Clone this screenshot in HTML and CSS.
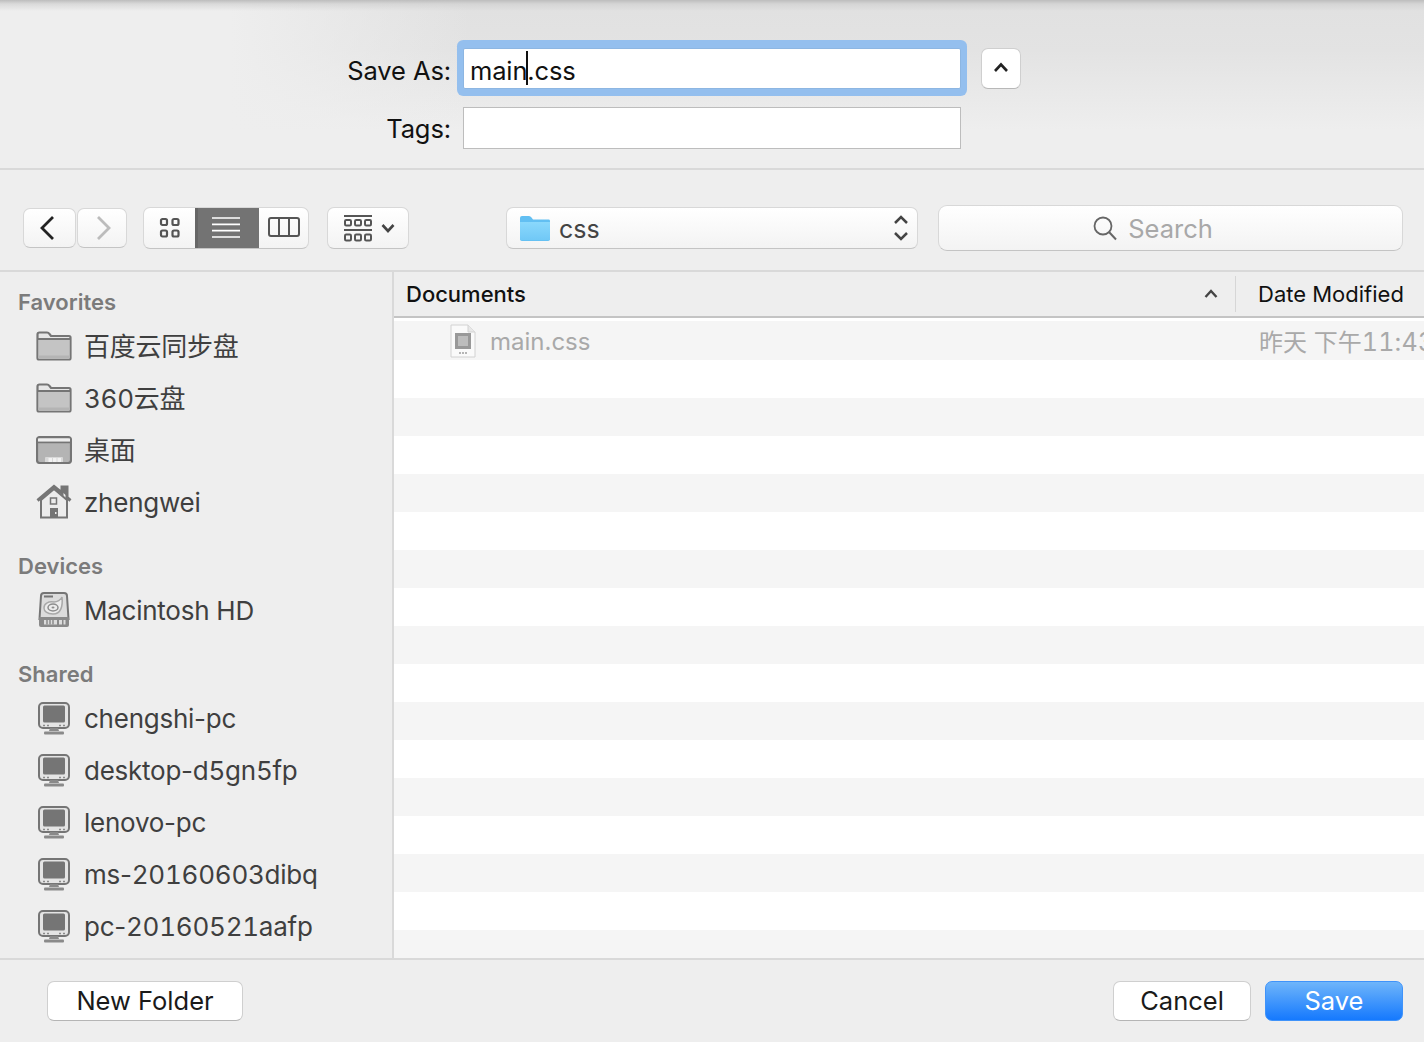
FILE: index.html
```html
<!DOCTYPE html>
<html lang="en">
<head>
<meta charset="utf-8">
<title>Save</title>
<link rel="stylesheet" href="styles.css">
</head>
<body>
<svg class="defs" width="0" height="0" aria-hidden="true">
  <defs>
    <linearGradient id="blue" x1="0" y1="0" x2="0" y2="1"><stop offset="0" stop-color="#8ad8fc"/><stop offset="1" stop-color="#70c8f6"/></linearGradient>
  </defs>
  <symbol id="folder" viewBox="0 0 36 30">
    <path d="M1.500 27V3.500Q1.500 1.500 3.500 1.500H11Q12.500 1.500 13.500 3L15 5H33Q34.500 5 34.500 6.500V27Q34.500 28.500 33 28.500H3Q1.500 28.500 1.500 27Z" fill="#e6e6e6" stroke="#757575" stroke-width="2.200"/>
    <path d="M2.500 9H33.500V27.500H2.500Z" fill="#c4c4c4"/>
    <path d="M2.500 24.500H33.500V27.500H2.500Z" fill="#b4b4b4"/>
    <path d="M2 8H34" stroke="#757575" stroke-width="2"/>
  </symbol>
  <symbol id="desktop" viewBox="0 0 36 28">
    <rect x="1" y="1" width="34" height="26" rx="3" fill="#b4b4b4" stroke="#757575" stroke-width="2.200"/>
    <path d="M2 2.500H34V5.500H2Z" fill="#eee"/>
    <path d="M2 6.500H34" stroke="#757575" stroke-width="1.500"/>
    <path d="M9 26V22Q9 21 10 21H26Q27 21 27 22V26Z" fill="#d8d8d8"/>
    <path d="M12.500 22H16V26H12.500ZM17 22H20.500V26H17ZM21.500 22H25V26H21.500Z" fill="#f2f2f2"/>
  </symbol>
  <symbol id="home" viewBox="0 0 36 36">
    <path d="M5 33.500V16L18 5 31 16V33.500Z" fill="#ececec" stroke="#757575" stroke-width="2"/>
    <path d="M1.500 16.500 18 2.500 26 9V3H31V13.500L34.500 16.500" fill="#757575" fill-opacity="0" stroke="#757575" stroke-width="3"/>
    <path d="M26 3H31V12L26 8Z" fill="#757575"/>
    <rect x="14.500" y="14" width="6" height="6" fill="none" stroke="#757575" stroke-width="1.500"/>
    <rect x="14" y="24" width="8" height="10" fill="#757575"/>
    <rect x="19" y="28" width="1.500" height="2" fill="#eee"/>
  </symbol>
  <symbol id="disk" viewBox="0 0 32 36">
    <path d="M1.500 27 3 4Q3 1 6 1H26Q29 1 29 4L30.500 27Z" fill="#dcdcdc" stroke="#757575" stroke-width="2"/>
    <path d="M6 4.500H15" stroke="#757575" stroke-width="2"/>
    <path d="M24 5C25 14 23 22 15 22 9 22 6 19 6 16 6 12 10 9 16 10 19 10 23 8 24 5Z" fill="#ececec" stroke="#a8a8a8" stroke-width="1.500"/>
    <ellipse cx="15" cy="15.500" rx="5" ry="3.500" fill="none" stroke="#8c8c8c" stroke-width="1.500"/>
    <ellipse cx="15" cy="15.500" rx="1.500" ry="1" fill="#8c8c8c"/>
    <path d="M1 26Q1 25 2 25H30Q31 25 31 26V33Q31 35 29 35H3Q1 35 1 33Z" fill="#8a8a8a"/>
    <path d="M6 28H19V32.500H6Z" fill="#dcdcdc"/>
    <path d="M9 28V32.500M12 28V32.500M15 28V32.500" stroke="#8a8a8a" stroke-width="1.500" fill="none"/>
    <path d="M21 28H24V32.500H21ZM25.500 28H27.500V32.500H25.500Z" fill="#dcdcdc"/>
  </symbol>
  <symbol id="computer" viewBox="0 0 32 33">
    <rect x="1" y="1" width="30" height="25" rx="4" fill="#e4e4e4" stroke="#757575" stroke-width="2"/>
    <rect x="5" y="3.500" width="22" height="17" rx="1.500" fill="#757575"/>
    <path d="M5 23.500H7M9 23.500H11M21 23.500H23M25 23.500H27" stroke="#8a8a8a" stroke-width="1.500"/>
    <path d="M12 26H20L21 29H11Z" fill="#8a8a8a"/>
    <rect x="6" y="29.500" width="20" height="3" rx="1" fill="#8a8a8a"/>
  </symbol>
</svg>

<main class="dialog">
  <section class="name-panel">
    <div class="name-grid">
      <label class="field-label">Save As:</label>
      <div class="field field-focus"><span class="typed">main<span class="caret"></span>.css</span></div>
      <button class="disclosure" type="button" aria-label="Collapse">
        <svg width="16" height="12" viewBox="0 0 16 12"><path d="M2 10 8 3.500 14 10" fill="none" stroke="#222" stroke-width="2.600"/></svg>
      </button>
      <label class="field-label">Tags:</label>
      <div class="field"></div>
    </div>
  </section>

  <section class="toolbar">
    <div class="segments nav">
      <button class="tool back" type="button" aria-label="Back">
        <svg width="16" height="26" viewBox="0 0 16 26"><path d="M14 2 3 13 14 24" fill="none" stroke="#222" stroke-width="2.800"/></svg>
      </button>
      <button class="tool forward" type="button" aria-label="Forward">
        <svg width="16" height="26" viewBox="0 0 16 26"><path d="M2 2 13 13 2 24" fill="none" stroke="#bcbcbc" stroke-width="2.800"/></svg>
      </button>
    </div>
    <div class="view-group">
      <button class="view view-icons" type="button" aria-label="Icons">
        <svg width="22" height="22" viewBox="0 0 22 22"><g fill="none" stroke="#555" stroke-width="2.200"><rect x="2" y="2" width="6" height="6" rx="1.500"/><rect x="13.500" y="2" width="6" height="6" rx="1.500"/><rect x="2" y="13.500" width="6" height="6" rx="1.500"/><rect x="13.500" y="13.500" width="6" height="6" rx="1.500"/></g></svg>
      </button>
      <button class="view view-list" type="button" aria-label="List">
        <svg width="30" height="22" viewBox="0 0 30 22"><path d="M1 2H29M1 8.300H29M1 14.600H29M1 21H29" stroke="#fff" stroke-width="1.700"/></svg>
      </button>
      <button class="view view-columns" type="button" aria-label="Columns">
        <svg width="32" height="20" viewBox="0 0 32 20"><path d="M1 3Q1 1 3 1H29Q31 1 31 3V17Q31 19 29 19H3Q1 19 1 17ZM11 1V19M21 1V19" fill="none" stroke="#555" stroke-width="2"/></svg>
      </button>
    </div>
    <button class="arrange" type="button" aria-label="Arrange">
      <svg width="30" height="27" viewBox="0 0 30 27"><path d="M1 1H29M1 15H29" stroke="#555" stroke-width="2"/><g fill="none" stroke="#555" stroke-width="2"><rect x="2" y="5" width="6" height="5.500" rx="1.200"/><rect x="12" y="5" width="6" height="5.500" rx="1.200"/><rect x="22" y="5" width="6" height="5.500" rx="1.200"/><rect x="2" y="19.500" width="6" height="6" rx="1.200"/><rect x="12" y="19.500" width="6" height="6" rx="1.200"/><rect x="22" y="19.500" width="6" height="6" rx="1.200"/></g></svg>
      <svg width="14" height="10" viewBox="0 0 14 10"><path d="M1.500 2 7 8 12.500 2" fill="none" stroke="#444" stroke-width="2.600"/></svg>
    </button>
    <button class="path-popup" type="button">
      <svg class="css-folder" width="30" height="26" viewBox="0 0 30 26"><path d="M0 23V2Q0 0 2 0H9Q10.500 0 11.500 1.500L13 3.500H29Q30 3.500 30 5V23Q30 25 28 25H2Q0 25 0 23Z" fill="#62bff2"/><path d="M0 6H30V23Q30 24.300 28 24.300H2Q0 24.300 0 23Z" fill="url(#blue)"/></svg>
      <span class="path-name">css</span>
      <svg class="updown" width="16" height="28" viewBox="0 0 16 28"><path d="M2 9 8 3 14 9M2 19 8 25 14 19" fill="none" stroke="#444" stroke-width="2.500"/></svg>
    </button>
    <div class="search">
      <svg width="26" height="26" viewBox="0 0 26 26"><circle cx="11" cy="11" r="8.500" fill="none" stroke="#666" stroke-width="1.800"/><path d="M17 17 24 24.500" stroke="#666" stroke-width="2"/></svg>
      <span>Search</span>
    </div>
  </section>

  <section class="browser">
    <aside class="sidebar">
      <div class="side-group">
        <h2>Favorites</h2>
        <div class="side-item"><svg class="ico" width="36" height="30"><use href="#folder"/></svg><span class="cjk">百度云同步盘</span></div>
        <div class="side-item"><svg class="ico" width="36" height="30"><use href="#folder"/></svg><span class="cjk"><span class="num">360</span>云盘</span></div>
        <div class="side-item"><svg class="ico" width="36" height="28"><use href="#desktop"/></svg><span class="cjk">桌面</span></div>
        <div class="side-item"><svg class="ico" width="36" height="36"><use href="#home"/></svg><span>zhengwei</span></div>
      </div>
      <div class="side-group">
        <h2>Devices</h2>
        <div class="side-item"><svg class="ico" width="36" height="36"><use href="#disk"/></svg><span>Macintosh HD</span></div>
      </div>
      <div class="side-group">
        <h2>Shared</h2>
        <div class="side-item"><svg class="ico" width="36" height="33"><use href="#computer"/></svg><span>chengshi-pc</span></div>
        <div class="side-item"><svg class="ico" width="36" height="33"><use href="#computer"/></svg><span>desktop-d<span class="num">5</span>gn<span class="num">5</span>fp</span></div>
        <div class="side-item"><svg class="ico" width="36" height="33"><use href="#computer"/></svg><span>lenovo-pc</span></div>
        <div class="side-item"><svg class="ico" width="36" height="33"><use href="#computer"/></svg><span>ms-<span class="num">20160603</span>dibq</span></div>
        <div class="side-item"><svg class="ico" width="36" height="33"><use href="#computer"/></svg><span>pc-<span class="num">20160521</span>aafp</span></div>
      </div>
    </aside>
    <div class="files">
      <header class="file-head">
        <div class="col-name">
          <span>Documents</span>
          <svg width="14" height="10" viewBox="0 0 14 10"><path d="M1.500 8 7 2 12.500 8" fill="none" stroke="#444" stroke-width="2.400"/></svg>
        </div>
        <div class="col-date">Date Modified</div>
      </header>
      <div class="file-row">
        <div class="file-name">
          <svg width="26" height="34" viewBox="0 0 26 34"><path d="M1 1H18L25 8V33H1Z" fill="#fafafa" stroke="#d2d2d2" stroke-width="1"/><path d="M18 1V8H25" fill="#e8e8e8" stroke="#d2d2d2"/><rect x="5" y="9" width="16" height="16" fill="#999"/><rect x="8" y="12" width="10" height="10" fill="#bdbdbd"/><path d="M9 29H17" stroke="#b5b5b5" stroke-width="2" stroke-dasharray="2 1"/></svg>
          <span class="file-label">main.css</span>
        </div>
        <div class="file-date">昨天 下午<span class="clock">11:43</span></div>
      </div>
      <div class="stripes"></div>
    </div>
  </section>

  <footer class="actions">
    <button class="btn btn-folder" type="button">New Folder</button>
    <div class="action-right">
      <button class="btn btn-cancel" type="button">Cancel</button>
      <button class="btn btn-save" type="button">Save</button>
    </div>
  </footer>
</main>
</body>
</html>
```
FILE: styles.css
```css
* { box-sizing: border-box; }
html, body { margin: 0; height: 100%; overflow: hidden; }
body {
  background: #eeeeee;
  color: #000;
  font-family: Inter, "Noto Sans CJK SC", sans-serif;
}
button { font: inherit; padding: 0; margin: 0; }
.defs { position: absolute; }
.dialog { height: 1042px; display: flex; flex-direction: column; }

/* name panel */
.name-panel {
  height: 170px;
  border-bottom: 2px solid #d9d9d9;
  padding-top: 48px;
  background:
    linear-gradient(180deg, #bdbdbd 0, rgba(205,205,205,.6) 4px, rgba(226,226,226,0) 11px),
    linear-gradient(90deg, #eeeeee 230px, rgba(238,238,238,0) 470px),
    linear-gradient(180deg, #e1e1e1 10px, #e3e3e3 50px, #eeeeee 130px);
}
.name-grid {
  display: grid;
  grid-template-columns: 451px 498px 60px;
  grid-template-rows: 41px 42px;
  column-gap: 12px;
  row-gap: 18px;
  align-items: center;
}
.field-label { text-align: right; font-size: 25.500px; letter-spacing: -.1px; color: #111; padding-top: 4px; }
.field {
  height: 100%;
  background: #fff;
  border: 1px solid #bdbdbd;
  display: flex;
  align-items: center;
  padding: 3px 0 0 6px;
}
.name-grid .field-label:nth-child(4) { padding-top: 0; }
.field-focus {
  border-color: #8db6e2;
  box-shadow: 0 -2px 0 6px #94bfee, 0 1px 0 6px #94bfee;
  border-radius: 2px;
}
.typed { position: relative; font-size: 25.500px; letter-spacing: -.15px; color: #111; }
.caret { position: absolute; top: -4px; width: 2px; height: 34px; background: #111; margin-left: -1px; }
.disclosure {
  justify-self: start;
  margin-left: 8px;
  width: 40px;
  height: 41px;
  background: #fff;
  border: 1px solid #cfcfcf;
  border-bottom-color: #b8b8b8;
  border-radius: 7px;
  display: flex;
  align-items: center;
  justify-content: center;
  padding-bottom: 3px;
}

/* toolbar */
.toolbar {
  height: 102px;
  border-bottom: 2px solid #d9d9d9;
  display: flex;
  align-items: flex-start;
  padding: 35px 0 0 23px;
}
.segments { display: flex; gap: 1px; margin-top: 3px; }
.tool, .view-group, .arrange, .path-popup, .search {
  background: linear-gradient(180deg, #fff, #f3f3f3);
  border: 1px solid #d8d8d8;
  border-bottom-color: #c4c4c4;
  display: flex;
  align-items: center;
  justify-content: center;
}
.tool { height: 40px; border-radius: 7px; }
.back { width: 53px; padding-right: 6px; }
.forward { width: 50px; padding-left: 3px; }
.view-group { margin: 2px 0 0 16px; width: 166px; height: 42px; border-radius: 7px; overflow: hidden; align-items: stretch; }
.view { border: 0; background: none; display: flex; align-items: center; justify-content: center; }
.view-icons { width: 51px; padding-bottom: 1px; }
.view-list { width: 64px; background: #737373; border-left: 3px solid #666; padding: 0 6px 3px 0; }
.view-columns { width: 49px; padding-bottom: 2px; }
.arrange { margin: 2px 0 0 18px; width: 82px; height: 42px; border-radius: 7px; gap: 8px; padding-left: 2px; }
.path-popup {
  margin: 2px 0 0 97px;
  width: 412px;
  height: 42px;
  border-radius: 7px;
  justify-content: flex-start;
  padding: 0 8px 0 13px;
}
.css-folder { margin-top: 2px; }
.path-name { margin-left: 9px; font-size: 25px; color: #444; flex: 1; text-align: left; padding-top: 1px; }
.search {
  margin-left: 20px;
  width: 465px;
  height: 46px;
  border-radius: 9px;
  gap: 10px;
  font-size: 25.500px;
  color: #a8a8a8;
  padding-right: 36px;
}

/* browser */
.browser { flex: 1; display: flex; min-height: 0; }
.sidebar { width: 394px; border-right: 2px solid #d9d9d9; padding-top: 8px; }
.side-group + .side-group { margin-top: 16px; }
.side-group h2 {
  margin: 0;
  height: 40px;
  line-height: 44px;
  padding-left: 18px;
  font-size: 22px;
  font-weight: 600;
  color: #7b7b7b;
}
.side-item {
  height: 52px;
  display: flex;
  align-items: center;
  padding-left: 36px;
  font-size: 26px;
  color: #3f3f3f;
}
.ico { width: 36px; flex: none; }
.side-item > span { margin-left: 12px; letter-spacing: -.25px; }
.side-item > .cjk { padding-bottom: 4px; }
.num { font-variant-numeric: tabular-nums; }
.files { flex: 1; min-width: 0; background: #fff; display: flex; flex-direction: column; overflow: hidden; }
.file-head {
  height: 46px;
  flex: none;
  background: #eeeeee;
  border-bottom: 2px solid #c4c4c4;
  display: flex;
  align-items: center;
  font-size: 22px;
  color: #111;
  padding-bottom: 1px;
}
.col-name {
  width: 842px;
  height: 36px;
  border-right: 1px solid #d6d6d6;
  display: flex;
  align-items: center;
  justify-content: space-between;
  padding: 0 17px 0 12px;
  font-weight: 500;
}
.col-date { padding-left: 22px; white-space: nowrap; }
.file-row {
  flex: none;
  margin-top: 3px;
  height: 39px;
  background: #f5f5f5;
  display: flex;
  align-items: center;
  color: #a9a9a9;
  font-size: 24px;
}
.file-name { width: 865px; flex: none; display: flex; align-items: center; gap: 14px; padding-left: 56px; }
.file-label { padding-top: 2px; }
.file-date { flex: none; white-space: nowrap; padding-bottom: 1px; }
.clock { font-variant-numeric: tabular-nums; font-size: 25px; letter-spacing: .2px; }
.stripes { flex: 1; background: repeating-linear-gradient(180deg, #fff 0 38px, #f5f5f5 38px 76px); }

/* footer */
.actions {
  height: 84px;
  flex: none;
  border-top: 2px solid #d9d9d9;
  display: flex;
  justify-content: space-between;
  padding: 21px 21px 0 47px;
}
.action-right { display: flex; gap: 14px; }
.btn {
  height: 40px;
  background: #fff;
  border: 1px solid #cfcfcf;
  border-bottom-color: #b5b5b5;
  border-radius: 7px;
  font-size: 25.500px;
  color: #1a1a1a;
  width: 138px;
  padding-bottom: 2px;
}
.btn-folder { width: 196px; }
.btn-save {
  background: linear-gradient(180deg, #6fb5fa, #1579fe);
  border: 1px solid #3f93fa;
  color: #fff;
}
```
